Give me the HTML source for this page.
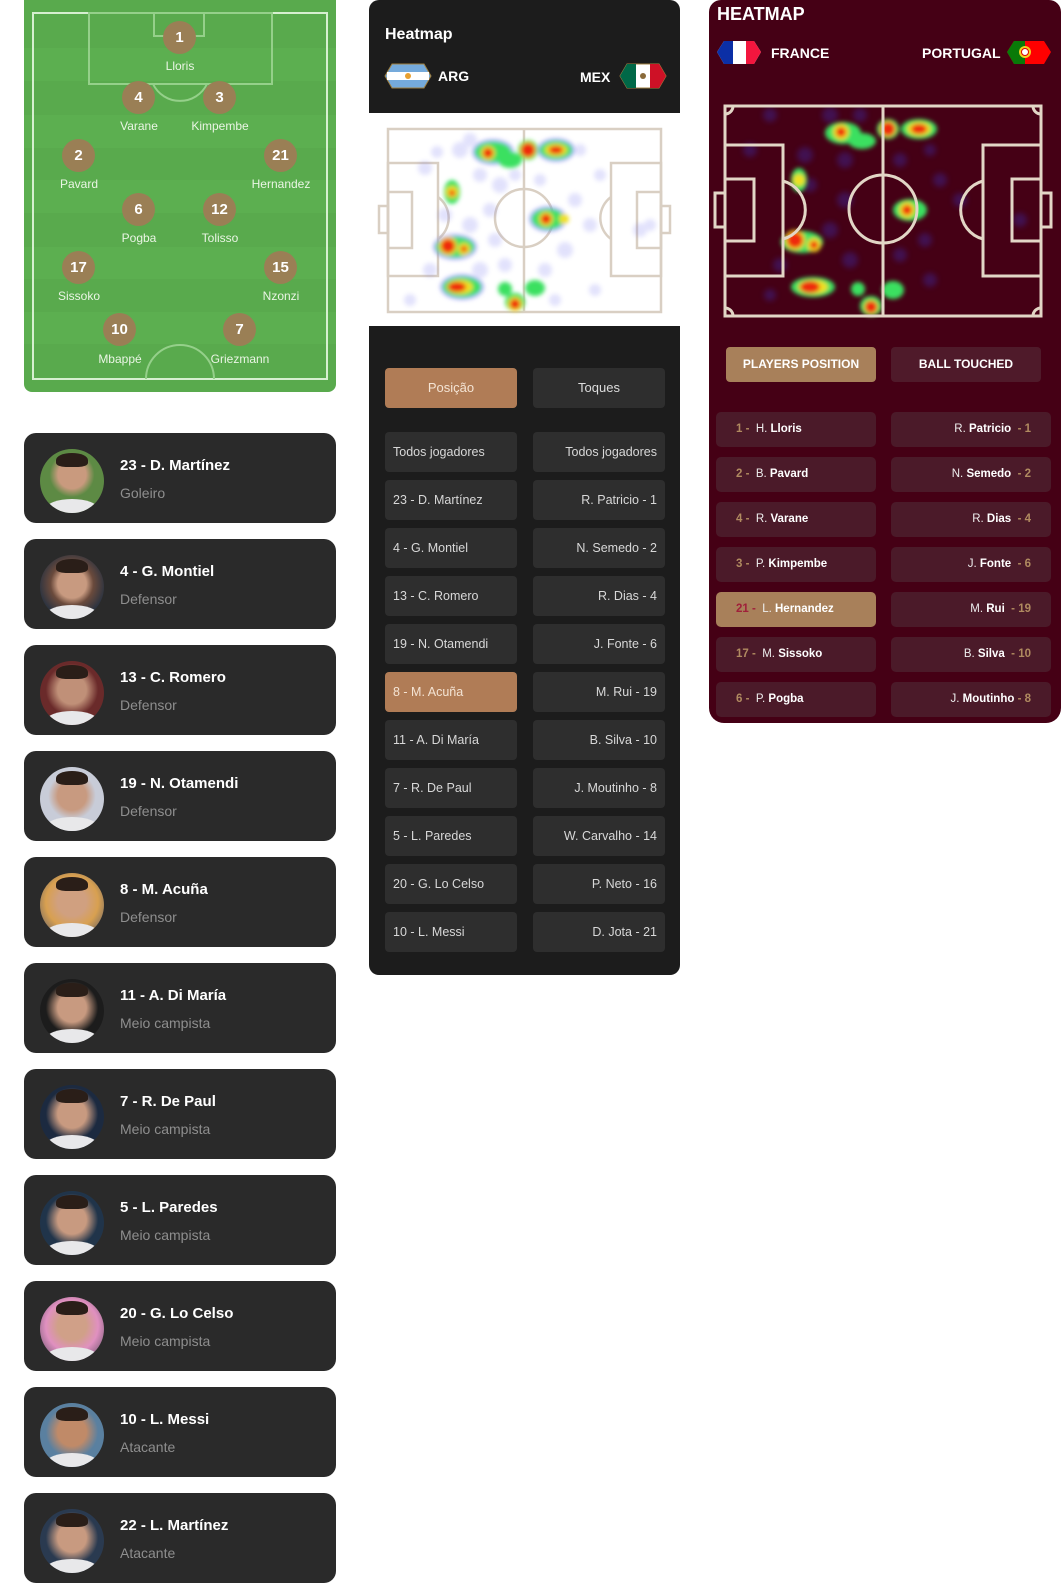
<!DOCTYPE html>
<html><head><meta charset="utf-8"><style>
*{margin:0;padding:0;box-sizing:border-box}
body{width:1061px;height:1583px;background:#fff;position:relative;overflow:hidden;font-family:"Liberation Sans",sans-serif}
.a{position:absolute}
.card{position:absolute;left:24px;width:312px;height:90px;background:#2a2a2a;border-radius:12px}
.card .av{position:absolute;left:16px;top:16px;width:64px;height:64px;border-radius:50%;overflow:hidden;background:radial-gradient(circle at 50% 45%,#c89a80 0 30%,#6a4a3c 45%,#2e3440 70%)}
.card .av:after{content:"";position:absolute;left:6px;right:6px;bottom:-6px;height:20px;border-radius:50% 50% 0 0;background:#e8e8ea}
.card .av:before{content:"";position:absolute;left:16px;width:32px;top:4px;height:14px;border-radius:50% 50% 30% 30%;background:#2a1e18;z-index:1}
.card .n{position:absolute;left:96px;top:24px;color:#fff;font-weight:bold;font-size:15px}
.card .r{position:absolute;left:96px;top:52px;color:#8e8e8e;font-size:14px}
.mr{position:absolute;width:132px;height:40px;background:#2e2e2e;border-radius:4px;color:#d8d8d8;font-size:12.5px;line-height:40px;padding:0 8px}
.rr{position:absolute;width:160px;height:35px;background:#4b1a29;border-radius:5px;color:#eee;font-size:11.5px;line-height:35px;padding:0 20px}
.rr b{color:#fff}.rr i{font-style:normal;color:#b08a60;font-weight:bold}
.pc{position:absolute;width:33px;height:33px;border-radius:50%;background:#9a7f55;color:#fff;font-weight:bold;font-size:15px;text-align:center;line-height:33px}
.pl{position:absolute;width:100px;text-align:center;color:#eaf5e4;font-size:12px}
</style></head><body>

<!-- LEFT PITCH -->
<div class="a" style="left:24px;top:0;width:312px;height:392px;border-radius:0 0 8px 8px;overflow:hidden;background:#59aa4d;">
<svg width="312" height="392" class="a" style="left:0;top:0">
<g fill="#5caf50"><rect y="48" width="312" height="33"/><rect y="115" width="312" height="33"/><rect y="180" width="312" height="33"/><rect y="247" width="312" height="32"/><rect y="312" width="312" height="32"/></g>
<g fill="none" stroke="#95d08a" stroke-width="2"><rect x="9" y="13" width="294" height="366" stroke="#d6efd0"/><rect x="65" y="13" width="183" height="71"/><rect x="130" y="13" width="50" height="23"/><path d="M129 84 A30 30 0 0 0 183 84"/><path d="M122 379 A34 34 0 0 1 190 379"/></g>
</svg>
</div>
<div class="pc" style="left:163px;top:21px">1</div><div class="pl" style="left:130px;top:59px">Lloris</div>
<div class="pc" style="left:122px;top:81px">4</div><div class="pl" style="left:89px;top:119px">Varane</div>
<div class="pc" style="left:203px;top:81px">3</div><div class="pl" style="left:170px;top:119px">Kimpembe</div>
<div class="pc" style="left:62px;top:139px">2</div><div class="pl" style="left:29px;top:177px">Pavard</div>
<div class="pc" style="left:264px;top:139px">21</div><div class="pl" style="left:231px;top:177px">Hernandez</div>
<div class="pc" style="left:122px;top:193px">6</div><div class="pl" style="left:89px;top:231px">Pogba</div>
<div class="pc" style="left:203px;top:193px">12</div><div class="pl" style="left:170px;top:231px">Tolisso</div>
<div class="pc" style="left:62px;top:251px">17</div><div class="pl" style="left:29px;top:289px">Sissoko</div>
<div class="pc" style="left:264px;top:251px">15</div><div class="pl" style="left:231px;top:289px">Nzonzi</div>
<div class="pc" style="left:103px;top:313px">10</div><div class="pl" style="left:70px;top:352px">Mbappé</div>
<div class="pc" style="left:223px;top:313px">7</div><div class="pl" style="left:190px;top:352px">Griezmann</div>

<!-- CARDS -->
<div class="card" style="top:433px"><div class="av" style="background:radial-gradient(circle at 50% 40%,#c99a7e 0 28%,#5d8a44 45%)"></div><div class="n">23 - D. Martínez</div><div class="r">Goleiro</div></div>
<div class="card" style="top:539px"><div class="av"></div><div class="n">4 - G. Montiel</div><div class="r">Defensor</div></div>
<div class="card" style="top:645px"><div class="av" style="background:radial-gradient(circle at 50% 45%,#c09078 0 30%,#6a2a2a 55%)"></div><div class="n">13 - C. Romero</div><div class="r">Defensor</div></div>
<div class="card" style="top:751px"><div class="av" style="background:radial-gradient(circle at 50% 45%,#c89a80 0 30%,#c8ccd8 50%)"></div><div class="n">19 - N. Otamendi</div><div class="r">Defensor</div></div>
<div class="card" style="top:857px"><div class="av" style="background:radial-gradient(circle at 50% 45%,#d0a080 0 30%,#d8a050 55%,#3a4a70)"></div><div class="n">8 - M. Acuña</div><div class="r">Defensor</div></div>
<div class="card" style="top:963px"><div class="av" style="background:radial-gradient(circle at 50% 45%,#c89a80 0 30%,#1c1c1c 55%)"></div><div class="n">11 - A. Di María</div><div class="r">Meio campista</div></div>
<div class="card" style="top:1069px"><div class="av" style="background:radial-gradient(circle at 50% 45%,#c89a80 0 30%,#1c2a40 55%)"></div><div class="n">7 - R. De Paul</div><div class="r">Meio campista</div></div>
<div class="card" style="top:1175px"><div class="av" style="background:radial-gradient(circle at 50% 45%,#c89a80 0 30%,#20344a 55%)"></div><div class="n">5 - L. Paredes</div><div class="r">Meio campista</div></div>
<div class="card" style="top:1281px"><div class="av" style="background:radial-gradient(circle at 50% 45%,#d0a088 0 30%,#e090c0 55%,#404050)"></div><div class="n">20 - G. Lo Celso</div><div class="r">Meio campista</div></div>
<div class="card" style="top:1387px"><div class="av" style="background:radial-gradient(circle at 50% 45%,#c08a68 0 30%,#5a80a0 55%)"></div><div class="n">10 - L. Messi</div><div class="r">Atacante</div></div>
<div class="card" style="top:1493px"><div class="av" style="background:radial-gradient(circle at 50% 45%,#c89a80 0 30%,#2a3a50 55%)"></div><div class="n">22 - L. Martínez</div><div class="r">Atacante</div></div>

<!-- MIDDLE PANEL -->
<div class="a" style="left:369px;top:0;width:311px;height:975px;background:#1c1c1c;border-radius:10px"></div>
<div class="a" style="left:385px;top:26px;color:#fff;font-weight:bold;font-size:16px">Heatmap</div>
<svg class="a" style="left:384px;top:63px" width="48" height="26"><polygon points="8,1 40,1 47,13 40,25 8,25 1,13" fill="#75aadb" stroke="#a08040"/><rect x="3" y="9" width="42" height="8" fill="#fff"/><circle cx="24" cy="13" r="3" fill="#e8a030"/></svg>
<div class="a" style="left:438px;top:68px;color:#fff;font-weight:bold;font-size:14px">ARG</div>
<div class="a" style="left:580px;top:69px;color:#fff;font-weight:bold;font-size:14px">MEX</div>
<svg class="a" style="left:619px;top:63px" width="48" height="26"><polygon points="8,1 40,1 47,13 40,25 8,25 1,13" fill="#fff" stroke="#a08040"/><polygon points="8,1 17,1 17,25 8,25 1,13" fill="#006847"/><polygon points="31,1 40,1 47,13 40,25 31,25" fill="#ce1126"/><circle cx="24" cy="13" r="3" fill="#8a6a3a"/></svg>
<div class="a" style="left:369px;top:113px;width:311px;height:213px;background:#fff"></div>
<svg class="a" style="left:369px;top:113px" width="311" height="213">
<defs><filter id="b1" x="-50%" y="-50%" width="200%" height="200%"><feGaussianBlur stdDeviation="2.5"/></filter><filter id="b2" x="-50%" y="-50%" width="200%" height="200%"><feGaussianBlur stdDeviation="2"/></filter></defs>
<g transform="translate(-369,-113)">
<g fill="none" stroke="#d9cfc3" stroke-width="2.5"><rect x="388" y="129" width="273" height="183"/><line x1="524" y1="129" x2="524" y2="312"/><circle cx="524" cy="218" r="29"/><rect x="388" y="163" width="50" height="113"/><rect x="388" y="192" width="24" height="56"/><rect x="379" y="206" width="9" height="27"/><path d="M438 197 A26 26 0 0 1 438 239"/><rect x="611" y="163" width="50" height="113"/><rect x="637" y="192" width="24" height="56"/><rect x="661" y="206" width="9" height="27"/><path d="M611 197 A26 26 0 0 0 611 239"/></g>
<g fill="#7070f0" opacity=".2" filter="url(#b1)"><circle cx="425" cy="168" r="7"/><circle cx="437" cy="152" r="6"/><circle cx="470" cy="140" r="7"/><circle cx="480" cy="175" r="7"/><circle cx="500" cy="185" r="8"/><circle cx="490" cy="210" r="7"/><circle cx="470" cy="225" r="8"/><circle cx="495" cy="240" r="7"/><circle cx="505" cy="265" r="7"/><circle cx="430" cy="270" r="7"/><circle cx="480" cy="270" r="8"/><circle cx="445" cy="215" r="7"/><circle cx="540" cy="180" r="6"/><circle cx="575" cy="200" r="7"/><circle cx="590" cy="225" r="7"/><circle cx="565" cy="250" r="8"/><circle cx="545" cy="270" r="7"/><circle cx="600" cy="175" r="6"/><circle cx="640" cy="230" r="7"/><circle cx="650" cy="225" r="6"/><circle cx="595" cy="290" r="6"/><circle cx="410" cy="300" r="6"/><circle cx="460" cy="150" r="8"/><circle cx="515" cy="175" r="6"/><circle cx="555" cy="300" r="6"/><circle cx="580" cy="150" r="6"/></g>
<g filter="url(#b2)"><g fill="#7a7af0" opacity=".6"><ellipse cx="493" cy="152" rx="21" ry="13"/><ellipse cx="556" cy="150" rx="19" ry="12"/><ellipse cx="548" cy="219" rx="19" ry="13"/><ellipse cx="455" cy="247" rx="22" ry="13"/><ellipse cx="462" cy="287" rx="22" ry="13"/></g>
<g fill="#3be060"><ellipse cx="493" cy="152" rx="18" ry="10"/><ellipse cx="510" cy="160" rx="12" ry="8"/><ellipse cx="528" cy="150" rx="10" ry="10"/><ellipse cx="556" cy="150" rx="16" ry="9"/><ellipse cx="452" cy="192" rx="8" ry="12"/><ellipse cx="548" cy="219" rx="16" ry="10"/><ellipse cx="455" cy="247" rx="19" ry="10"/><ellipse cx="462" cy="287" rx="19" ry="10"/><ellipse cx="515" cy="302" rx="10" ry="9"/><ellipse cx="535" cy="288" rx="10" ry="8"/><ellipse cx="505" cy="289" rx="7" ry="7"/></g>
<g fill="#f0e020"><circle cx="488" cy="153" r="7"/><circle cx="528" cy="150" r="8"/><ellipse cx="556" cy="150" rx="11" ry="6"/><circle cx="452" cy="192" r="6"/><circle cx="546" cy="219" r="7"/><circle cx="564" cy="219" r="5"/><circle cx="448" cy="246" r="9"/><circle cx="464" cy="249" r="6"/><ellipse cx="460" cy="287" rx="13" ry="7"/><circle cx="515" cy="304" r="7"/></g>
<g fill="#ee2a10"><circle cx="488" cy="153" r="5"/><circle cx="528" cy="150" r="7"/><ellipse cx="556" cy="150" rx="7" ry="4"/><circle cx="452" cy="193" r="3"/><circle cx="546" cy="219" r="5"/><circle cx="448" cy="246" r="7"/><circle cx="464" cy="249" r="3"/><ellipse cx="457" cy="287" rx="9" ry="5"/><circle cx="515" cy="304" r="5"/></g></g>
</g></svg>
<div class="a" style="left:385px;top:368px;width:132px;height:40px;background:#b07c56;border-radius:4px;color:#f4e4d4;font-size:13px;text-align:center;line-height:40px">Posição</div>
<div class="a" style="left:533px;top:368px;width:132px;height:40px;background:#2e2e2e;border-radius:4px;color:#ddd;font-size:13px;text-align:center;line-height:40px">Toques</div>
<div class="mr" style="left:385px;top:432px">Todos jogadores</div><div class="mr" style="left:533px;top:432px;text-align:right">Todos jogadores</div>
<div class="mr" style="left:385px;top:480px">23 - D. Martínez</div><div class="mr" style="left:533px;top:480px;text-align:right">R. Patricio - 1</div>
<div class="mr" style="left:385px;top:528px">4 - G. Montiel</div><div class="mr" style="left:533px;top:528px;text-align:right">N. Semedo - 2</div>
<div class="mr" style="left:385px;top:576px">13 - C. Romero</div><div class="mr" style="left:533px;top:576px;text-align:right">R. Dias - 4</div>
<div class="mr" style="left:385px;top:624px">19 - N. Otamendi</div><div class="mr" style="left:533px;top:624px;text-align:right">J. Fonte - 6</div>
<div class="mr" style="left:385px;top:672px;background:#b07c56;color:#f4e4d4">8 - M. Acuña</div><div class="mr" style="left:533px;top:672px;text-align:right">M. Rui - 19</div>
<div class="mr" style="left:385px;top:720px">11 - A. Di María</div><div class="mr" style="left:533px;top:720px;text-align:right">B. Silva - 10</div>
<div class="mr" style="left:385px;top:768px">7 - R. De Paul</div><div class="mr" style="left:533px;top:768px;text-align:right">J. Moutinho - 8</div>
<div class="mr" style="left:385px;top:816px">5 - L. Paredes</div><div class="mr" style="left:533px;top:816px;text-align:right">W. Carvalho - 14</div>
<div class="mr" style="left:385px;top:864px">20 - G. Lo Celso</div><div class="mr" style="left:533px;top:864px;text-align:right">P. Neto - 16</div>
<div class="mr" style="left:385px;top:912px">10 - L. Messi</div><div class="mr" style="left:533px;top:912px;text-align:right">D. Jota - 21</div>

<!-- RIGHT PANEL -->
<div class="a" style="left:709px;top:0;width:352px;height:723px;background:#450015;border-radius:12px 12px 15px 15px"></div>
<div class="a" style="left:717px;top:4px;color:#fff;font-weight:bold;font-size:18px">HEATMAP</div>
<svg class="a" style="left:716px;top:40px" width="46" height="25"><polygon points="8,1 38,1 45,12 38,24 8,24 1,12" fill="#fff"/><polygon points="8,1 17,1 17,24 8,24 1,12" fill="#0b2fa6"/><polygon points="30,1 38,1 45,12 38,24 30,24" fill="#f3163e"/></svg>
<div class="a" style="left:771px;top:45px;color:#fff;font-weight:bold;font-size:14px">FRANCE</div>
<div class="a" style="left:922px;top:45px;color:#fff;font-weight:bold;font-size:14px">PORTUGAL</div>
<svg class="a" style="left:1006px;top:40px" width="46" height="25"><polygon points="8,1 38,1 45,12 38,24 8,24 1,12" fill="#f00"/><polygon points="8,1 19,1 19,24 8,24 1,12" fill="#087a08"/><circle cx="19" cy="12" r="6" fill="#f0d020"/><circle cx="19" cy="12" r="3.5" fill="#fff" stroke="#d00"/></svg>
<svg class="a" style="left:709px;top:95px" width="352" height="230">
<defs><filter id="c1" x="-50%" y="-50%" width="200%" height="200%"><feGaussianBlur stdDeviation="3"/></filter><filter id="c2" x="-50%" y="-50%" width="200%" height="200%"><feGaussianBlur stdDeviation="2"/></filter></defs>
<g transform="translate(-709,-95)">
<g fill="#3a30c0" opacity=".35" filter="url(#c1)"><circle cx="770" cy="115" r="7"/><circle cx="830" cy="115" r="8"/><circle cx="860" cy="115" r="7"/><circle cx="750" cy="150" r="7"/><circle cx="805" cy="155" r="8"/><circle cx="845" cy="160" r="8"/><circle cx="810" cy="185" r="7"/><circle cx="845" cy="200" r="8"/><circle cx="830" cy="230" r="8"/><circle cx="850" cy="260" r="8"/><circle cx="780" cy="265" r="7"/><circle cx="770" cy="295" r="6"/><circle cx="900" cy="160" r="7"/><circle cx="930" cy="150" r="6"/><circle cx="940" cy="180" r="7"/><circle cx="925" cy="240" r="7"/><circle cx="930" cy="280" r="7"/><circle cx="960" cy="200" r="7"/><circle cx="1020" cy="220" r="7"/><circle cx="900" cy="255" r="7"/></g>
<g filter="url(#c2)"><g fill="#3be060"><ellipse cx="843" cy="133" rx="18" ry="11"/><ellipse cx="862" cy="141" rx="14" ry="8"/><ellipse cx="888" cy="129" rx="11" ry="10"/><ellipse cx="919" cy="129" rx="18" ry="10"/><ellipse cx="799" cy="180" rx="8" ry="12"/><ellipse cx="910" cy="210" rx="17" ry="11"/><ellipse cx="802" cy="242" rx="21" ry="11"/><ellipse cx="813" cy="287" rx="22" ry="10"/><ellipse cx="871" cy="306" rx="11" ry="10"/><ellipse cx="893" cy="290" rx="11" ry="9"/><ellipse cx="858" cy="289" rx="7" ry="7"/></g>
<g fill="#f0e020"><circle cx="841" cy="132" r="8"/><circle cx="888" cy="129" r="8"/><ellipse cx="919" cy="129" rx="12" ry="7"/><circle cx="799" cy="180" r="6"/><circle cx="907" cy="210" r="8"/><circle cx="795" cy="240" r="10"/><circle cx="814" cy="245" r="7"/><ellipse cx="813" cy="287" rx="15" ry="7"/><circle cx="871" cy="307" r="7"/></g>
<g fill="#ee2a10"><circle cx="841" cy="132" r="5"/><circle cx="888" cy="129" r="7"/><ellipse cx="919" cy="129" rx="8" ry="5"/><circle cx="907" cy="210" r="5"/><circle cx="795" cy="240" r="8"/><circle cx="814" cy="245" r="4"/><ellipse cx="810" cy="287" rx="10" ry="6"/><circle cx="871" cy="307" r="6"/></g></g>
<g fill="none" stroke="#e2d6c6" stroke-width="3"><rect x="725" y="106" width="316" height="210"/><line x1="883" y1="106" x2="883" y2="316"/><circle cx="883" cy="209" r="34"/><rect x="725" y="145" width="58" height="131"/><rect x="725" y="179" width="29" height="62"/><rect x="715" y="193" width="10" height="34"/><path d="M783 181 A30 30 0 0 1 783 239"/><rect x="983" y="145" width="58" height="131"/><rect x="1012" y="179" width="29" height="62"/><rect x="1041" y="193" width="10" height="34"/><path d="M983 181 A30 30 0 0 0 983 239"/><path d="M725 114 A8 8 0 0 0 733 106"/><path d="M1033 106 A8 8 0 0 0 1041 114"/><path d="M725 308 A8 8 0 0 1 733 316"/><path d="M1033 316 A8 8 0 0 1 1041 308"/></g>
</g></svg>
<div class="a" style="left:726px;top:347px;width:150px;height:35px;background:#a8805a;border-radius:4px;color:#fff;font-weight:bold;font-size:12px;text-align:center;line-height:35px">PLAYERS POSITION</div>
<div class="a" style="left:891px;top:347px;width:150px;height:35px;background:#4f1a2a;border-radius:4px;color:#fff;font-weight:bold;font-size:12px;text-align:center;line-height:35px">BALL TOUCHED</div>
<div class="rr" style="left:716px;top:412px"><i>1 - </i>&nbsp;H. <b>Lloris</b></div><div class="rr" style="left:891px;top:412px;text-align:right">R. <b>Patricio</b> &nbsp;<i>- 1</i></div>
<div class="rr" style="left:716px;top:457px"><i>2 - </i>&nbsp;B. <b>Pavard</b></div><div class="rr" style="left:891px;top:457px;text-align:right">N. <b>Semedo</b> &nbsp;<i>- 2</i></div>
<div class="rr" style="left:716px;top:502px"><i>4 - </i>&nbsp;R. <b>Varane</b></div><div class="rr" style="left:891px;top:502px;text-align:right">R. <b>Dias</b> &nbsp;<i>- 4</i></div>
<div class="rr" style="left:716px;top:547px"><i>3 - </i>&nbsp;P. <b>Kimpembe</b></div><div class="rr" style="left:891px;top:547px;text-align:right">J. <b>Fonte</b> &nbsp;<i>- 6</i></div>
<div class="rr" style="left:716px;top:592px;background:#a8805a"><i style="color:#a0203a">21 - </i>&nbsp;L. <b>Hernandez</b></div><div class="rr" style="left:891px;top:592px;text-align:right">M. <b>Rui</b> &nbsp;<i>- 19</i></div>
<div class="rr" style="left:716px;top:637px"><i>17 - </i>&nbsp;M. <b>Sissoko</b></div><div class="rr" style="left:891px;top:637px;text-align:right">B. <b>Silva</b> &nbsp;<i>- 10</i></div>
<div class="rr" style="left:716px;top:682px"><i>6 - </i>&nbsp;P. <b>Pogba</b></div><div class="rr" style="left:891px;top:682px;text-align:right">J. <b>Moutinho</b> <i>- 8</i></div>
</body></html>
